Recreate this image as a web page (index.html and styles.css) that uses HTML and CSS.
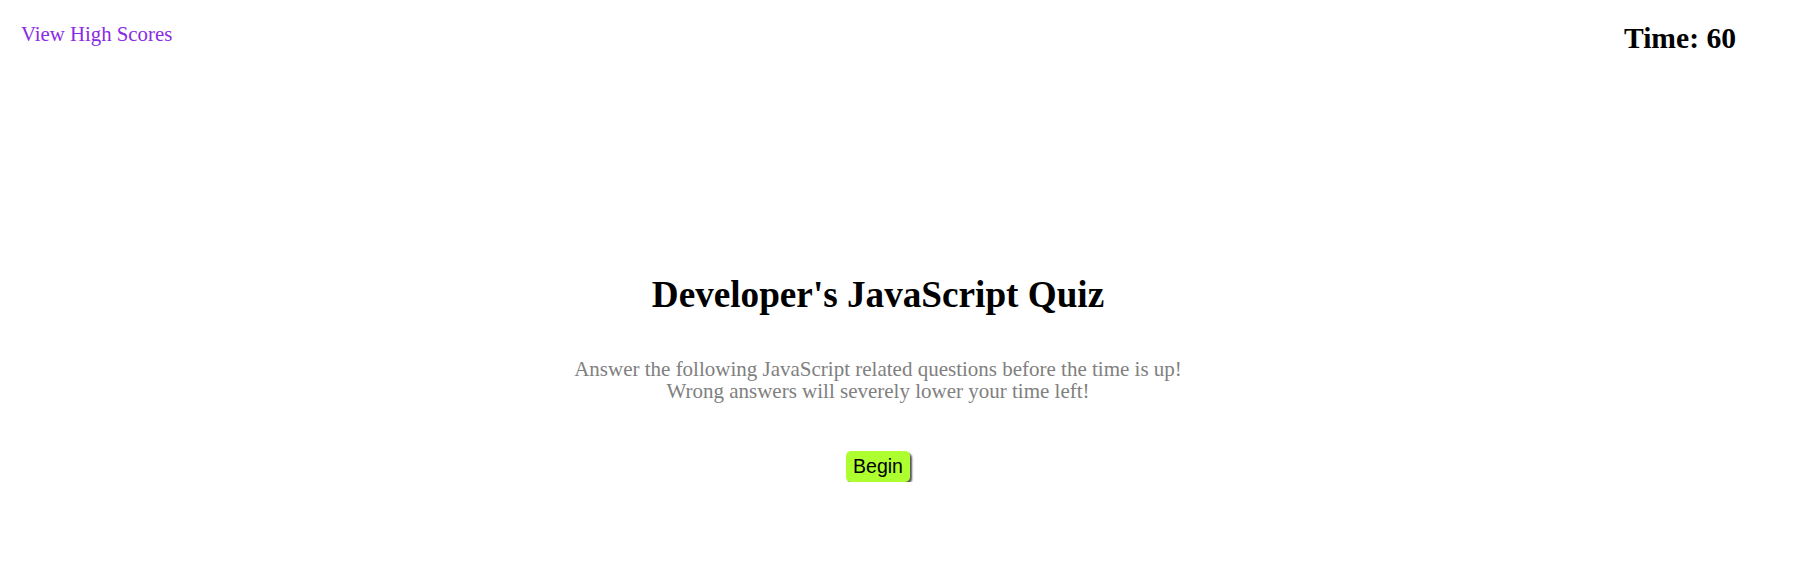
FILE: index.html
```html
<!DOCTYPE html>
<html>
<head>
<meta charset="utf-8">
<title>Developer's JavaScript Quiz</title>
<link rel="stylesheet" href="styles.css">
</head>
<body>
<header class="top-bar">
  <a class="scores-link" href="#">View High Scores</a>
  <div class="timer">Time: 60</div>
</header>
<main class="intro">
  <h1 class="intro-title">Developer's JavaScript Quiz</h1>
  <p class="intro-text">Answer the following JavaScript related questions before the time is up!<br>Wrong answers will severely lower your time left!</p>
  <button class="begin-btn" type="button">Begin</button>
</main>
</body>
</html>
```
FILE: styles.css
```css
html, body {
  margin: 0;
  padding: 0;
  background: #ffffff;
}
body {
  font-family: "Liberation Serif", "Times New Roman", serif;
  color: #000;
}
.top-bar {
  display: flex;
  justify-content: space-between;
  align-items: flex-start;
  padding: 22px 59px 0 21px;
  height: 40px;
}
.scores-link {
  font-size: 20.8px;
  line-height: 23px;
  color: #8a2be2;
  text-decoration: none;
}
.timer {
  font-size: 29.6px;
  font-weight: bold;
  line-height: 34px;
  margin-top: -1px;
}
.intro {
  display: flex;
  flex-direction: column;
  align-items: center;
  padding-right: 39px;
  margin-top: 212px;
}
.intro-title {
  margin: 0;
  font-size: 37.2px;
  line-height: 42px;
  font-weight: bold;
}
.intro-text {
  margin: 42px 0 0;
  font-size: 21px;
  line-height: 22px;
  color: #808080;
  text-align: center;
}
.begin-btn {
  margin-top: 49px;
  font-family: "Liberation Sans", Arial, sans-serif;
  font-size: 19.5px;
  line-height: 23px;
  padding: 4px 7px;
  background: #adff2f;
  color: #000;
  border: none;
  border-radius: 5px;
  box-shadow: 2px 2px 2px #555;
  cursor: pointer;
}
```
